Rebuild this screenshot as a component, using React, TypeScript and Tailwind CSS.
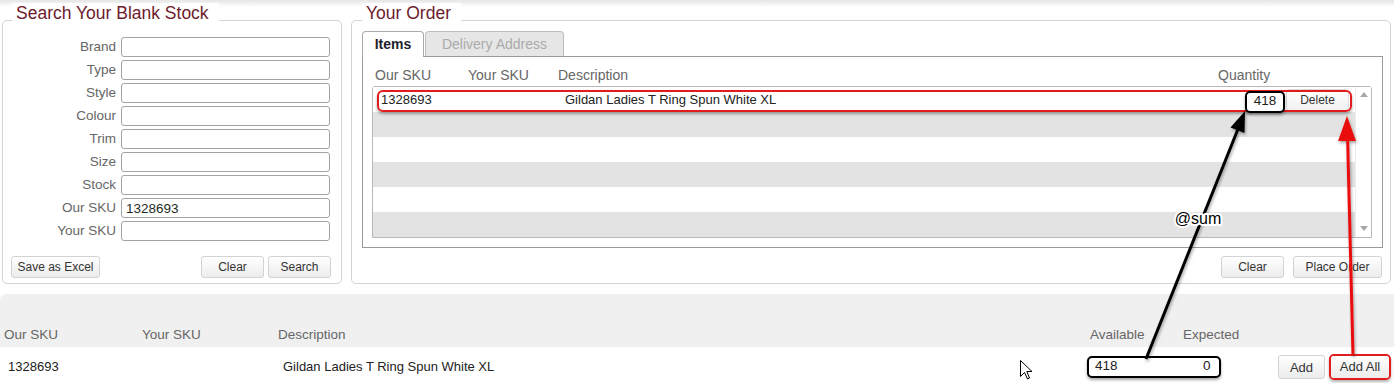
import type { ReactNode } from 'react'

const fields = ['Brand', 'Type', 'Style', 'Colour', 'Trim', 'Size', 'Stock', 'Our SKU', 'Your SKU']
const values: Record<string, string> = { 'Our SKU': '1328693' }

function Btn({ children, className = '' }: { children: ReactNode; className?: string }) {
  return (
    <button
      className={`h-[22px] shrink-0 rounded-[3px] border border-[#d3d3d3] bg-gradient-to-b from-white to-[#ececec] text-[12px] leading-none text-[#333] ${className}`}
    >
      {children}
    </button>
  )
}

function SearchPanel() {
  return (
    <fieldset className="w-[340px] rounded-[5px] border border-[#d4d4d4] bg-white px-0 pb-[5px]">
      <legend className="ml-[9px] bg-white pb-[14px] pl-[4px] pr-[10px] text-[17.5px] leading-[20px] text-[#6d1b2d]">
        Search Your Blank Stock
      </legend>
      <div className="flex flex-col gap-[3px]">
        {fields.map(f => (
          <div key={f} className="flex h-[20px] items-center gap-[5px]">
            <label className="w-[113px] text-right text-[13.5px] leading-[20px] text-[#666]">{f}</label>
            <input
              readOnly
              value={values[f] ?? ''}
              className="h-[20px] w-[209px] rounded-[3px] border border-[#a3a3a3] bg-white px-[4px] text-[13.5px] leading-[18px] text-[#1f2b1f] outline-none"
            />
          </div>
        ))}
      </div>
      <div className="mt-[15px] flex items-center justify-between pl-[8px] pr-[10px]">
        <Btn className="w-[89px]">Save as Excel</Btn>
        <div className="flex gap-[4px]">
          <Btn className="w-[63px]">Clear</Btn>
          <Btn className="w-[63px]">Search</Btn>
        </div>
      </div>
    </fieldset>
  )
}

function OrderPanel() {
  return (
    <fieldset className="flex-1 rounded-[5px] border border-[#d4d4d4] bg-white px-0 pb-[5px]">
      <legend className="ml-[10px] bg-white pb-[14px] pl-[4px] pr-[10px] text-[17.5px] leading-[20px] text-[#6d1b2d]">
        Your Order
      </legend>

      <div className="-mt-[6px] flex items-end pl-[10px]">
        <div className="relative z-10 -mb-px flex h-[26px] w-[62px] items-center justify-center rounded-t-[4px] border border-b-0 border-[#a9a9a9] bg-white text-[14px] font-bold text-[#1e1e2a]">
          Items
        </div>
        <div className="ml-px flex h-[25px] w-[139px] items-center justify-center rounded-t-[4px] border border-b-0 border-[#bdbdbd] bg-[#e6e6e6] text-[14px] text-[#ababab]">
          Delivery Address
        </div>
      </div>

      <div className="ml-[10px] mr-[7px] h-[192px] border border-[#9a9a9a] pl-[9px] pr-[10px]">
        <div className="flex h-[29px] items-end pb-[3px] pl-[3px] text-[14px] leading-[16px] text-[#666]">
          <span className="w-[93px]">Our SKU</span>
          <span className="w-[90px]">Your SKU</span>
          <span className="w-[660px]">Description</span>
          <span>Quantity</span>
        </div>

        <div className="flex h-[152px] rounded-t-[3px] border border-[#b8b8b8]">
          <div className="flex flex-1 flex-col">
            <div className="relative h-[25px] bg-white">
              <div className="flex h-full items-center pl-[8px] pr-[6px] text-[13px] text-[#222]">
                <span className="w-[184px] shrink-0">1328693</span>
                <span className="flex-1">Gildan Ladies T Ring Spun White XL</span>
                <button className="mt-[2px] h-[22px] w-[63px] shrink-0 self-start rounded-[3px] border border-[#dcdcdc] bg-gradient-to-b from-white to-[#f1f1f1] text-[12px] text-[#333]">
                  Delete
                </button>
              </div>
              <div className="pointer-events-none absolute left-[4px] top-[3px] h-[22px] w-[975px] rounded-[6px] border-2 border-[#e21c1c] shadow-[0_2px_3px_rgba(0,0,0,0.35)]" />
              <div className="absolute left-[872px] top-[4px] z-10 flex h-[22px] w-[40px] justify-center rounded-[5px] border-2 border-black bg-white text-[13.5px] leading-[15px] text-[#222] shadow-[0_2px_3px_rgba(0,0,0,0.35)]">
                418
              </div>
            </div>
            <div className="h-[25px] bg-[#e3e3e3]" />
            <div className="h-[25px] bg-white" />
            <div className="h-[25px] bg-[#e3e3e3]" />
            <div className="h-[25px] bg-white" />
            <div className="h-[25px] bg-[#e3e3e3]" />
          </div>
          <div className="flex w-[16px] flex-col items-center justify-between border-l border-[#ececec] bg-white pb-[6px] pt-[5px]">
            <svg width="8" height="5" viewBox="0 0 8 5"><path d="M4 0 L8 5 L0 5 Z" fill="#a8a8a8" /></svg>
            <svg width="8" height="5" viewBox="0 0 8 5"><path d="M0 0 L8 0 L4 5 Z" fill="#a8a8a8" /></svg>
          </div>
        </div>
      </div>

      <div className="mt-[8px] flex justify-end gap-[9px] pr-[8px]">
        <Btn className="w-[63px]">Clear</Btn>
        <Btn className="w-[89px]">Place Order</Btn>
      </div>
    </fieldset>
  )
}

function StockTable() {
  return (
    <div className="mt-[10px]">
      <div className="flex h-[53px] items-end rounded-tl-[6px] bg-[#f0f0f0] pb-[4px] pl-[4px] text-[13.5px] leading-[16px] text-[#666]">
        <span className="w-[138px]">Our SKU</span>
        <span className="w-[136px]">Your SKU</span>
        <span className="w-[812px]">Description</span>
        <span className="w-[93px]">Available</span>
        <span>Expected</span>
      </div>
      <div className="flex h-[40px] items-center text-[13px] text-[#222]">
        <span className="w-[283px] shrink-0 pl-[8px]">1328693</span>
        <span className="w-[804px] shrink-0">Gildan Ladies T Ring Spun White XL</span>
        <div className="flex h-[22px] w-[134px] shrink-0 items-start rounded-[5px] border-2 border-black bg-white pl-[6px] text-[13.5px] leading-[16px] shadow-[0_2px_3px_rgba(0,0,0,0.35)]">
          <span className="w-[108px]">418</span>
          <span>0</span>
        </div>
        <Btn className="ml-[57px] h-[24px] w-[47px] text-[13px]">Add</Btn>
        <div className="ml-[4px] flex h-[26px] w-[62px] shrink-0 items-center rounded-[5px] border-2 border-[#e21c1c] shadow-[0_2px_3px_rgba(0,0,0,0.3)]">
          <button className="h-full w-full rounded-[3px] bg-gradient-to-b from-white to-[#ececec] text-[13px] text-[#333]">
            Add All
          </button>
        </div>
      </div>
    </div>
  )
}

function Annotations() {
  return (
    <svg className="pointer-events-none absolute left-0 top-0" width="1394" height="383" viewBox="0 0 1394 383">
      <defs>
        <filter id="sh" x="-20%" y="-20%" width="140%" height="140%">
          <feDropShadow dx="1" dy="2" stdDeviation="1.5" floodColor="#000" floodOpacity="0.35" />
        </filter>
      </defs>
      <g filter="url(#sh)">
        <line x1="1146" y1="359" x2="1238" y2="129" stroke="#000" strokeWidth="3" />
        <polygon points="1245,111 1244.5,133 1230.5,127.5" fill="#000" />
        <line x1="1353" y1="355" x2="1347.6" y2="138" stroke="#ea1010" strokeWidth="3" />
        <polygon points="1347,116 1356,141 1338,141" fill="#ea1010" />
      </g>
      <text
        x="1198"
        y="224"
        textAnchor="middle"
        fontFamily="'Liberation Sans', Arial, sans-serif"
        fontSize="16"
        fill="#000"
        stroke="#fff"
        strokeWidth="4"
        strokeLinejoin="round"
        paintOrder="stroke"
      >
        @sum
      </text>
      <path
        d="M1020.5 360.5 L1020.5 376.5 L1024.5 372.5 L1027.5 379 L1029.5 378 L1026.8 371.5 L1032 371.5 Z"
        fill="#fff"
        stroke="#000"
        strokeWidth="1"
        strokeLinejoin="round"
      />
    </svg>
  )
}

export default function App() {
  return (
    <div className="relative h-[383px] w-[1394px] overflow-hidden bg-[linear-gradient(to_bottom,#e6e6e6,#ffffff_7px)] font-['Liberation_Sans',Arial,sans-serif]">
      <div className="flex gap-[9px] pl-[2px] pr-[3px] pt-[3px]">
        <SearchPanel />
        <OrderPanel />
      </div>
      <StockTable />
      <Annotations />
    </div>
  )
}
